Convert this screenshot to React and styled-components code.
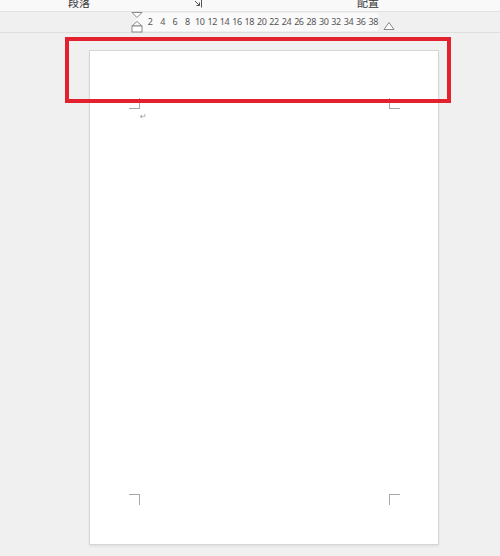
import styled, { createGlobalStyle } from "styled-components";

const GlobalStyle = createGlobalStyle`
  html, body {
    margin: 0;
    padding: 0;
    background: #f0f0f0;
    font-family: "Noto Sans CJK SC", "Noto Sans", sans-serif;
  }
`;

const numbers = [2, 4, 6, 8, 10, 12, 14, 16, 18, 20, 22, 24, 26, 28, 30, 32, 34, 36, 38];

// crop mark, drawn as two borders of a small box
function Corner({ edges }) {
  return <Mark edges={edges} />;
}

export default function App() {
  return (
    <>
      <GlobalStyle />
      <Screen>
        <Ribbon>
          <GroupLabel>段落</GroupLabel>
          <Launcher>
            <svg width="9" height="9" viewBox="0 0 9 9">
              <path d="M0.5 0.5H8.5V8.5" fill="none" stroke="#555" strokeWidth="1" />
              <path d="M2 2L6.5 6.5M3.5 6.5H6.5V3.5" fill="none" stroke="#555" strokeWidth="1" />
            </svg>
          </Launcher>
          <GroupLabel>配置</GroupLabel>
        </Ribbon>
        <RulerBar>
          <RulerWhite>
            <IndentMarker>
              <svg width="12" height="21" viewBox="0 0 12 21">
                <path d="M1 0.5H11L6 5.5Z" fill="#fff" stroke="#888" />
                <path d="M6 9.5L11 14H1Z" fill="#fff" stroke="#888" />
                <rect x="1" y="14" width="10" height="6" fill="#fff" stroke="#888" />
              </svg>
            </IndentMarker>
            <Ticks>
              {numbers.map((n) => (
                <Tick key={n}>{n}</Tick>
              ))}
            </Ticks>
          </RulerWhite>
          <RightMarker>
            <svg width="12" height="8" viewBox="0 0 12 8">
              <path d="M6 0.5L11 7.5H1Z" fill="#fff" stroke="#888" />
            </svg>
          </RightMarker>
        </RulerBar>
        <Canvas>
          <Page>
            <TopArea>
              <CornerRow>
                <Corner edges="right bottom" />
                <Corner edges="left bottom" />
              </CornerRow>
              <ParaMark>↵</ParaMark>
            </TopArea>
            <CornerRow>
              <Corner edges="right top" />
              <Corner edges="left top" />
            </CornerRow>
          </Page>
          <Highlight />
        </Canvas>
      </Screen>
    </>
  );
}

const Screen = styled.div`
  width: 500px;
  height: 556px;
  overflow: hidden;
  display: flex;
  flex-direction: column;
  background: #f0f0f0;
`;

const Ribbon = styled.div`
  height: 11px;
  flex: none;
  display: grid;
  grid-template-columns: 125px 164px auto;
  align-items: start;
  padding-left: 68px;
  background: #f9f9f9;
  border-bottom: 1px solid #e2e2e2;
  overflow: hidden;
`;

const GroupLabel = styled.span`
  margin-top: -6px;
  font-size: 11px;
  line-height: 16px;
  color: #333;
`;

const Launcher = styled.span`
  display: flex;
  margin-top: -1px;
`;

const RulerBar = styled.div`
  height: 20px;
  flex: none;
  display: flex;
  align-items: center;
  gap: 5px;
  padding-left: 136px;
  background: #f0f0f0;
  border-bottom: 1px solid #dedede;
`;

const RulerWhite = styled.div`
  position: relative;
  width: 242px;
  height: 18px;
  background: #fafafa;
  display: flex;
  align-items: center;
`;

const IndentMarker = styled.span`
  position: absolute;
  left: -5px;
  top: -1px;
  display: flex;
`;

const Ticks = styled.div`
  display: flex;
  padding-left: 8px;
`;

const Tick = styled.span`
  width: 12.4px;
  text-align: center;
  font-family: "Noto Sans", "DejaVu Sans", sans-serif;
  font-size: 9px;
  letter-spacing: -0.4px;
  line-height: 12px;
  color: #555;
`;

const RightMarker = styled.span`
  display: flex;
  align-self: flex-end;
  margin-bottom: 2px;
`;

const Canvas = styled.div`
  position: relative;
  flex: 1;
  padding: 17px 0 0 89px;
`;

const Page = styled.div`
  box-sizing: border-box;
  width: 350px;
  height: 495px;
  padding: 47px 38px 39px 39px;
  display: flex;
  flex-direction: column;
  justify-content: space-between;
  background: #fff;
  border: 1px solid #d5d5d5;
  box-shadow: 0 2px 2px rgba(0, 0, 0, 0.05);
`;

const TopArea = styled.div`
  display: flex;
  flex-direction: column;
`;

const CornerRow = styled.div`
  display: flex;
  justify-content: space-between;
`;

const Mark = styled.span`
  width: 10px;
  height: 10px;
  ${(p) =>
    p.edges
      .split(" ")
      .map((e) => `border-${e}: 1px solid #a8a8a8;`)
      .join("\n")}
`;

const ParaMark = styled.span`
  margin: 3px 0 0 11px;
  font-family: "DejaVu Sans", sans-serif;
  font-size: 8px;
  line-height: 9px;
  color: #999;
`;

const Highlight = styled.div`
  position: absolute;
  top: 4px;
  left: 65px;
  width: 378px;
  height: 58px;
  border: 4px solid #e2202e;
  pointer-events: none;
`;
